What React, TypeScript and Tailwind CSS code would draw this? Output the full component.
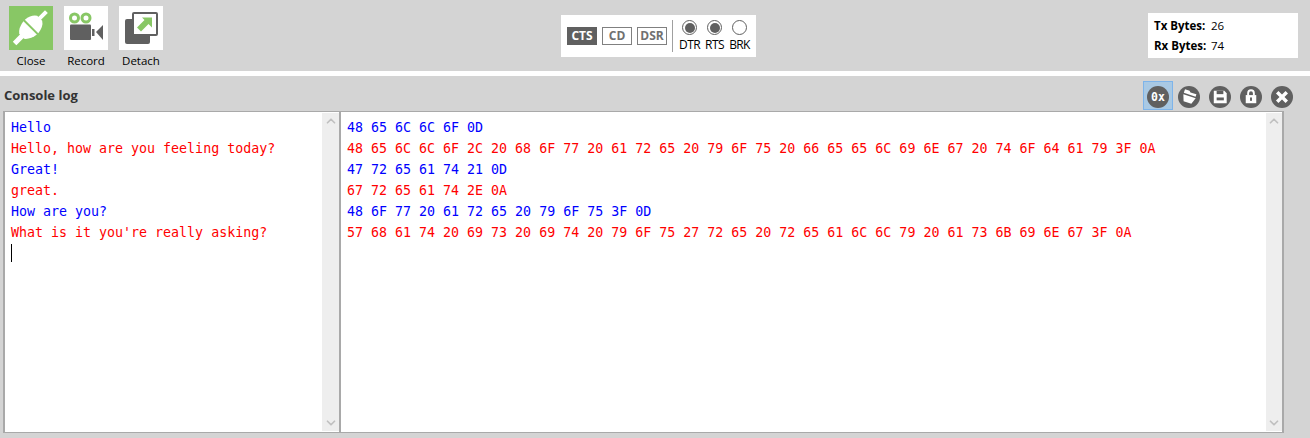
import { ChevronDown, ChevronUp } from "lucide-react";
import type { ReactNode } from "react";

const SANS = "font-['Open_Sans','Noto_Sans',sans-serif]";
const MONO = "font-['DejaVu_Sans_Mono',monospace]";
const TX = "text-[#0000ff]";
const RX = "text-[#ff0000]";

const textLines: [string, string][] = [
  ["Hello", TX],
  ["Hello, how are you feeling today?", RX],
  ["Great!", TX],
  ["great.", RX],
  ["How are you?", TX],
  ["What is it you're really asking?", RX],
];

const hexLines: [string, string][] = [
  ["48 65 6C 6C 6F 0D", TX],
  ["48 65 6C 6C 6F 2C 20 68 6F 77 20 61 72 65 20 79 6F 75 20 66 65 65 6C 69 6E 67 20 74 6F 64 61 79 3F 0A", RX],
  ["47 72 65 61 74 21 0D", TX],
  ["67 72 65 61 74 2E 0A", RX],
  ["48 6F 77 20 61 72 65 20 79 6F 75 3F 0D", TX],
  ["57 68 61 74 20 69 73 20 69 74 20 79 6F 75 27 72 65 20 72 65 61 6C 6C 79 20 61 73 6B 69 6E 67 3F 0A", RX],
];

function ToolButton({ label, green, children }: { label: string; green?: boolean; children: ReactNode }) {
  return (
    <div className="flex w-[44px] flex-col items-center">
      <div className={`h-[44px] w-[44px] ${green ? "bg-[#88c765]" : "bg-white"}`}>{children}</div>
      <span className="mt-[3px] whitespace-nowrap text-[11.5px] leading-[16px] text-black">{label}</span>
    </div>
  );
}

function PlugIcon() {
  return (
    <svg width="44" height="44" viewBox="0 0 44 44">
      <g transform="rotate(45 21.5 21.5)" fill="#fff">
        <rect x="19.500" y="-1" width="4" height="11" />
        <path d="M18 8.500h7q5 3 6 11.500H12q1-8.500 6-11.500z" />
        <path d="M12 22h19q-1 8-6 12H18q-5-4-6-12z" />
        <rect x="19" y="33" width="5" height="11" />
      </g>
    </svg>
  );
}

function CameraIcon() {
  return (
    <svg width="44" height="44" viewBox="0 0 44 44">
      <circle cx="10.500" cy="12" r="4" fill="none" stroke="#88c765" strokeWidth="3" />
      <circle cx="22" cy="12" r="4" fill="none" stroke="#88c765" strokeWidth="3" />
      <rect x="6" y="18.500" width="21" height="15.500" rx="1" fill="#606060" />
      <rect x="28" y="23" width="2.500" height="7" fill="#606060" />
      <path d="M32 26l7-7v15z" fill="#606060" />
    </svg>
  );
}

function DetachIcon() {
  return (
    <svg width="44" height="44" viewBox="0 0 44 44">
      <rect x="6" y="13" width="25" height="25" rx="2" fill="#606060" />
      <rect x="14" y="7" width="24" height="22" rx="1" fill="#fff" stroke="#606060" strokeWidth="2" />
      <path d="M23 11.500H33V21.500L29.500 18 22 25.500 18 21.500 25.500 14z" fill="#88c765" />
    </svg>
  );
}

function Signal({ label, on }: { label: string; on?: boolean }) {
  return (
    <span
      className={`flex h-[18px] w-[30px] items-center justify-center border text-[12px] font-bold leading-none ${
        on ? "border-[#606060] bg-[#606060] text-white" : "border-[#808080] bg-white text-[#707070]"
      }`}
    >
      {label}
    </span>
  );
}

function Led({ label, on }: { label: string; on?: boolean }) {
  return (
    <div className="flex w-[25px] flex-col items-center">
      <span className="flex h-[15px] w-[15px] items-center justify-center rounded-full border border-[#606060] bg-white">
        {on && <span className="h-[10px] w-[10px] rounded-full bg-[#606060]" />}
      </span>
      <span className="mt-[2px] whitespace-nowrap text-[12px] leading-[15px] tracking-[-0.6px] text-black">{label}</span>
    </div>
  );
}

function RoundButton({ children, active }: { children: ReactNode; active?: boolean }) {
  return (
    <div className={`flex h-[29px] w-[30px] items-center justify-center border pt-[2px] ${active ? "border-[#7eb4ea] bg-[#a9c9e4]" : "border-transparent"}`}>
      <svg width="22" height="22" viewBox="0 0 23 23">
        <circle cx="11.500" cy="11.500" r="11.500" fill="#606060" />
        {children}
      </svg>
    </div>
  );
}

function Scrollbar({ className }: { className: string }) {
  return (
    <div className={`flex shrink-0 flex-col items-center justify-between bg-[#eeeeee] py-[1px] text-[#c0c0c0] ${className}`}>
      <ChevronUp size={14} strokeWidth={3} />
      <ChevronDown size={14} strokeWidth={3} />
    </div>
  );
}

export default function App() {
  return (
    <div className={`h-[438px] w-[1310px] overflow-hidden bg-[#d4d4d4] ${SANS}`}>
      {/* top toolbar */}
      <div className="flex h-[71px] items-start justify-between pl-[9px] pr-[12px]">
        <div className="mr-[6px] flex gap-[11px] pt-[6px]">
          <ToolButton label="Close" green>
            <PlugIcon />
          </ToolButton>
          <ToolButton label="Record">
            <CameraIcon />
          </ToolButton>
          <ToolButton label="Detach">
            <DetachIcon />
          </ToolButton>
        </div>
        <div className="mt-[15px] flex h-[42px] w-[195px] items-center bg-white pl-[6px]">
          <div className="flex gap-[5px]">
            <Signal label="CTS" on />
            <Signal label="CD" />
            <Signal label="DSR" />
          </div>
          <div className="ml-[5px] mr-[4px] h-[32px] w-px bg-[#a0a0a0]" />
          <Led label="DTR" on />
          <Led label="RTS" on />
          <Led label="BRK" />
        </div>
        <div className="mt-[13px] flex h-[45px] w-[150px] flex-col justify-center gap-[3px] bg-white pl-[6px] text-[11.5px] leading-[17px] text-black">
          <div className="flex">
            <span className="w-[56px] font-bold">Tx Bytes:</span>
            <span className="pl-[1px]">26</span>
          </div>
          <div className="flex">
            <span className="w-[56px] font-bold">Rx Bytes:</span>
            <span className="pl-[1px]">74</span>
          </div>
        </div>
      </div>
      <div className="h-[5px] bg-white" />

      {/* console header */}
      <div className="flex h-[35px] items-center justify-between pb-[1px] pl-[4px] pr-[13px] pt-[5px]">
        <span className="mt-[1px] text-[13px] font-bold text-[#333333]">Console log</span>
        <div className="flex items-center gap-[1px]">
          <RoundButton active>
            <text x="11.500" y="16" textAnchor="middle" fill="#fff" fontSize="12" fontWeight="700" fontFamily="DejaVu Sans Mono">
              0x
            </text>
          </RoundButton>
          <RoundButton>
            <g transform="rotate(18 11.500 11.500)" fill="#fff">
              <path d="M5 5h5l1.500 1.500H18V9H5z" />
              <path d="M5 10.500h13.500L16 17.500H7.500z" />
            </g>
          </RoundButton>
          <RoundButton>
            <path d="M5 5h11l2.500 2.500V18H5z" fill="#fff" />
            <rect x="8" y="5" width="7" height="3.500" fill="#606060" />
            <rect x="8" y="12" width="7.500" height="3" fill="#606060" />
          </RoundButton>
          <RoundButton>
            <path d="M8.500 10V7.500a3 3 0 0 1 6 0V10" fill="none" stroke="#fff" strokeWidth="2" />
            <rect x="6" y="9.500" width="11" height="8.500" fill="#fff" />
            <rect x="10.500" y="12" width="2" height="3.500" fill="#606060" />
          </RoundButton>
          <RoundButton>
            <path d="M6.500 6.500l10 10M16.500 6.500l-10 10" stroke="#fff" strokeWidth="3.600" />
          </RoundButton>
        </div>
      </div>

      {/* panes */}
      <div className="flex h-[322px] pl-[3px] pr-[26px]">
        <div className="flex w-[338px] shrink-0 border-y border-l-2 border-r-2 border-[#a9a9a9] bg-white py-px">
          <div className={`min-w-0 flex-1 overflow-hidden pl-[6px] pt-[4px] text-[13.3px] leading-[21px] ${MONO}`}>
            {textLines.map(([line, color]) => (
              <div key={line} className={`whitespace-pre ${color}`}>
                {line}
              </div>
            ))}
            <div className="mt-[1px] h-[18px] w-px bg-black" />
          </div>
          <Scrollbar className="w-[17px]" />
        </div>
        <div className="flex flex-1 border-y border-r-2 border-[#a9a9a9] bg-white py-px">
          <div className={`min-w-0 flex-1 overflow-hidden pl-[6px] pt-[4px] text-[13.3px] leading-[21px] ${MONO}`}>
            {hexLines.map(([line, color]) => (
              <div key={line} className={`whitespace-pre ${color}`}>
                {line}
              </div>
            ))}
          </div>
          <Scrollbar className="w-[16px]" />
        </div>
      </div>
    </div>
  );
}
